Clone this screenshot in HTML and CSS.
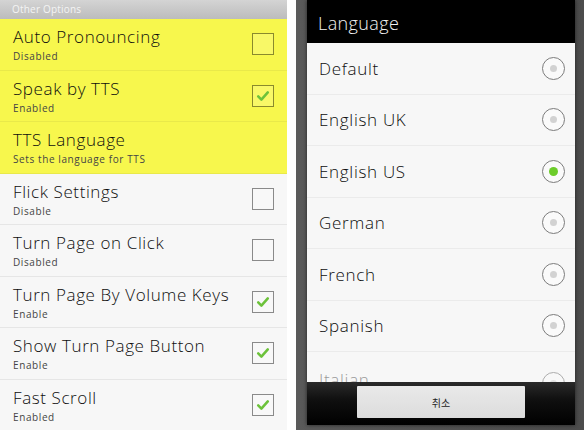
FILE: index.html
```html
<!DOCTYPE html>
<html lang="en">
<head>
    <meta charset="UTF-8">
    <title>Reader Settings</title>
    <link rel="stylesheet" href="styles.css">
</head>
<body>
    <div class="screen settings">
        <div class="section-header">Other Options</div>

        <div class="pref highlight">
            <div class="pref-text">
                <div class="pref-title">Auto Pronouncing</div>
                <div class="pref-summary">Disabled</div>
            </div>
            <span class="check"></span>
        </div>

        <div class="pref highlight">
            <div class="pref-text">
                <div class="pref-title">Speak by TTS</div>
                <div class="pref-summary">Enabled</div>
            </div>
            <span class="check checked">
                <svg viewBox="0 0 20 20"><path d="M4 10.5 L8 14.5 L16 5.5" /></svg>
            </span>
        </div>

        <div class="pref highlight">
            <div class="pref-text">
                <div class="pref-title">TTS Language</div>
                <div class="pref-summary">Sets the language for TTS</div>
            </div>
        </div>

        <div class="pref">
            <div class="pref-text">
                <div class="pref-title">Flick Settings</div>
                <div class="pref-summary">Disable</div>
            </div>
            <span class="check"></span>
        </div>

        <div class="pref">
            <div class="pref-text">
                <div class="pref-title">Turn Page on Click</div>
                <div class="pref-summary">Disabled</div>
            </div>
            <span class="check"></span>
        </div>

        <div class="pref">
            <div class="pref-text">
                <div class="pref-title">Turn Page By Volume Keys</div>
                <div class="pref-summary">Enable</div>
            </div>
            <span class="check checked">
                <svg viewBox="0 0 20 20"><path d="M4 10.5 L8 14.5 L16 5.5" /></svg>
            </span>
        </div>

        <div class="pref">
            <div class="pref-text">
                <div class="pref-title">Show Turn Page Button</div>
                <div class="pref-summary">Enable</div>
            </div>
            <span class="check checked">
                <svg viewBox="0 0 20 20"><path d="M4 10.5 L8 14.5 L16 5.5" /></svg>
            </span>
        </div>

        <div class="pref">
            <div class="pref-text">
                <div class="pref-title">Fast Scroll</div>
                <div class="pref-summary">Enabled</div>
            </div>
            <span class="check checked">
                <svg viewBox="0 0 20 20"><path d="M4 10.5 L8 14.5 L16 5.5" /></svg>
            </span>
        </div>
    </div>

    <div class="divider"></div>

    <div class="screen dimmed">
        <div class="dialog">
            <div class="dialog-title">Language</div>
            <div class="choice-list">
                <div class="choice"><span>Default</span><span class="radio"></span></div>
                <div class="choice"><span>English UK</span><span class="radio"></span></div>
                <div class="choice"><span>English US</span><span class="radio selected"></span></div>
                <div class="choice"><span>German</span><span class="radio"></span></div>
                <div class="choice"><span>French</span><span class="radio"></span></div>
                <div class="choice"><span>Spanish</span><span class="radio"></span></div>
                <div class="choice faded"><span>Italian</span><span class="radio"></span></div>
            </div>
            <div class="button-bar">
                <button type="button">취소</button>
            </div>
        </div>
    </div>
</body>
</html>
```

FILE: styles.css
```css
* {
    margin: 0;
    padding: 0;
    box-sizing: border-box;
}

body {
    width: 584px;
    height: 430px;
    overflow: hidden;
    display: flex;
    background: #fff;
    font-family: 'Open Sans', 'Noto Sans CJK KR', sans-serif;
}

.screen {
    height: 430px;
    overflow: hidden;
}

.settings {
    width: 287px;
    background: #f7f7f7;
}

.divider {
    width: 9px;
    background: #fff;
}

.section-header {
    height: 19px;
    padding-left: 12px;
    line-height: 19px;
    font-size: 10px;
    letter-spacing: 0.2px;
    color: #f4f4f4;
    background: linear-gradient(#d4d4d4, #bcbcbc);
}

.pref {
    height: 51.5px;
    display: flex;
    align-items: center;
    padding: 0 13px;
    border-bottom: 1px solid #e6e6e6;
}

.pref.highlight {
    background: #f7f74d;
    border-bottom-color: #e9e94a;
}

.pref-text {
    flex: 1;
    padding-top: 2px;
}

.pref-title {
    font-size: 17px;
    font-weight: 300;
    line-height: 20px;
    color: #0e0e0e;
    letter-spacing: 0.6px;
}

.pref-summary {
    margin-top: 2px;
    font-size: 10px;
    line-height: 14px;
    letter-spacing: 0.6px;
    color: #454545;
}

.check {
    width: 22px;
    height: 22px;
    border: 1.5px solid #8a8a8a;
    background: rgba(255, 255, 255, 0.15);
    display: flex;
    align-items: center;
    justify-content: center;
}

.highlight .check {
    border-color: #8a8a2c;
}

.check svg {
    width: 16px;
    height: 16px;
}

.check path {
    fill: none;
    stroke: #6cc23a;
    stroke-width: 3.2;
    stroke-linecap: round;
    stroke-linejoin: round;
}

.dimmed {
    flex: 1;
    background: linear-gradient(90deg, #5a5a5a, #4c4c4c);
    padding: 0 9px 0 11px;
}

.dialog {
    height: 425px;
    display: flex;
    flex-direction: column;
    box-shadow: 0 0 4px rgba(0, 0, 0, 0.6);
}

.dialog-title {
    height: 43px;
    background: #000;
    color: #f2f2f2;
    font-size: 18px;
    font-weight: 300;
    letter-spacing: 0.4px;
    line-height: 46px;
    padding-left: 11px;
}

.choice-list {
    flex: 1;
    overflow: hidden;
    background: #f7f7f7;
}

.choice {
    height: 51.5px;
    display: flex;
    align-items: center;
    justify-content: space-between;
    padding: 0 10px 0 12px;
    border-bottom: 1px solid #ebebeb;
    font-size: 17px;
    font-weight: 300;
    letter-spacing: 0.7px;
    color: #0e0e0e;
}

.choice.faded {
    color: #9a9a9a;
    align-items: flex-end;
    height: 29px;
    border-bottom: none;
}

.choice.faded span:first-child {
    margin-bottom: -10px;
}

.choice.faded .radio {
    margin-bottom: -14px;
    opacity: 0.6;
}

.radio {
    width: 23px;
    height: 23px;
    border-radius: 50%;
    border: 1.5px solid #7c7c7c;
    background: #fafafa;
    display: flex;
    align-items: center;
    justify-content: center;
}

.radio::after {
    content: '';
    width: 7px;
    height: 7px;
    border-radius: 50%;
    background: #d2d2d2;
}

.radio.selected::after {
    width: 9px;
    height: 9px;
    background: #6ccc2a;
}

.button-bar {
    height: 43px;
    background: linear-gradient(#2a2a2a, #101010 40%, #000);
    display: flex;
    justify-content: center;
    padding-top: 4px;
}

.button-bar button {
    width: 168px;
    height: 32px;
    border: none;
    border-radius: 1px;
    background: linear-gradient(#e9e9e9, #dcdcdc);
    font-family: 'Noto Sans CJK KR', sans-serif;
    font-size: 10px;
    color: #222;
}
```
